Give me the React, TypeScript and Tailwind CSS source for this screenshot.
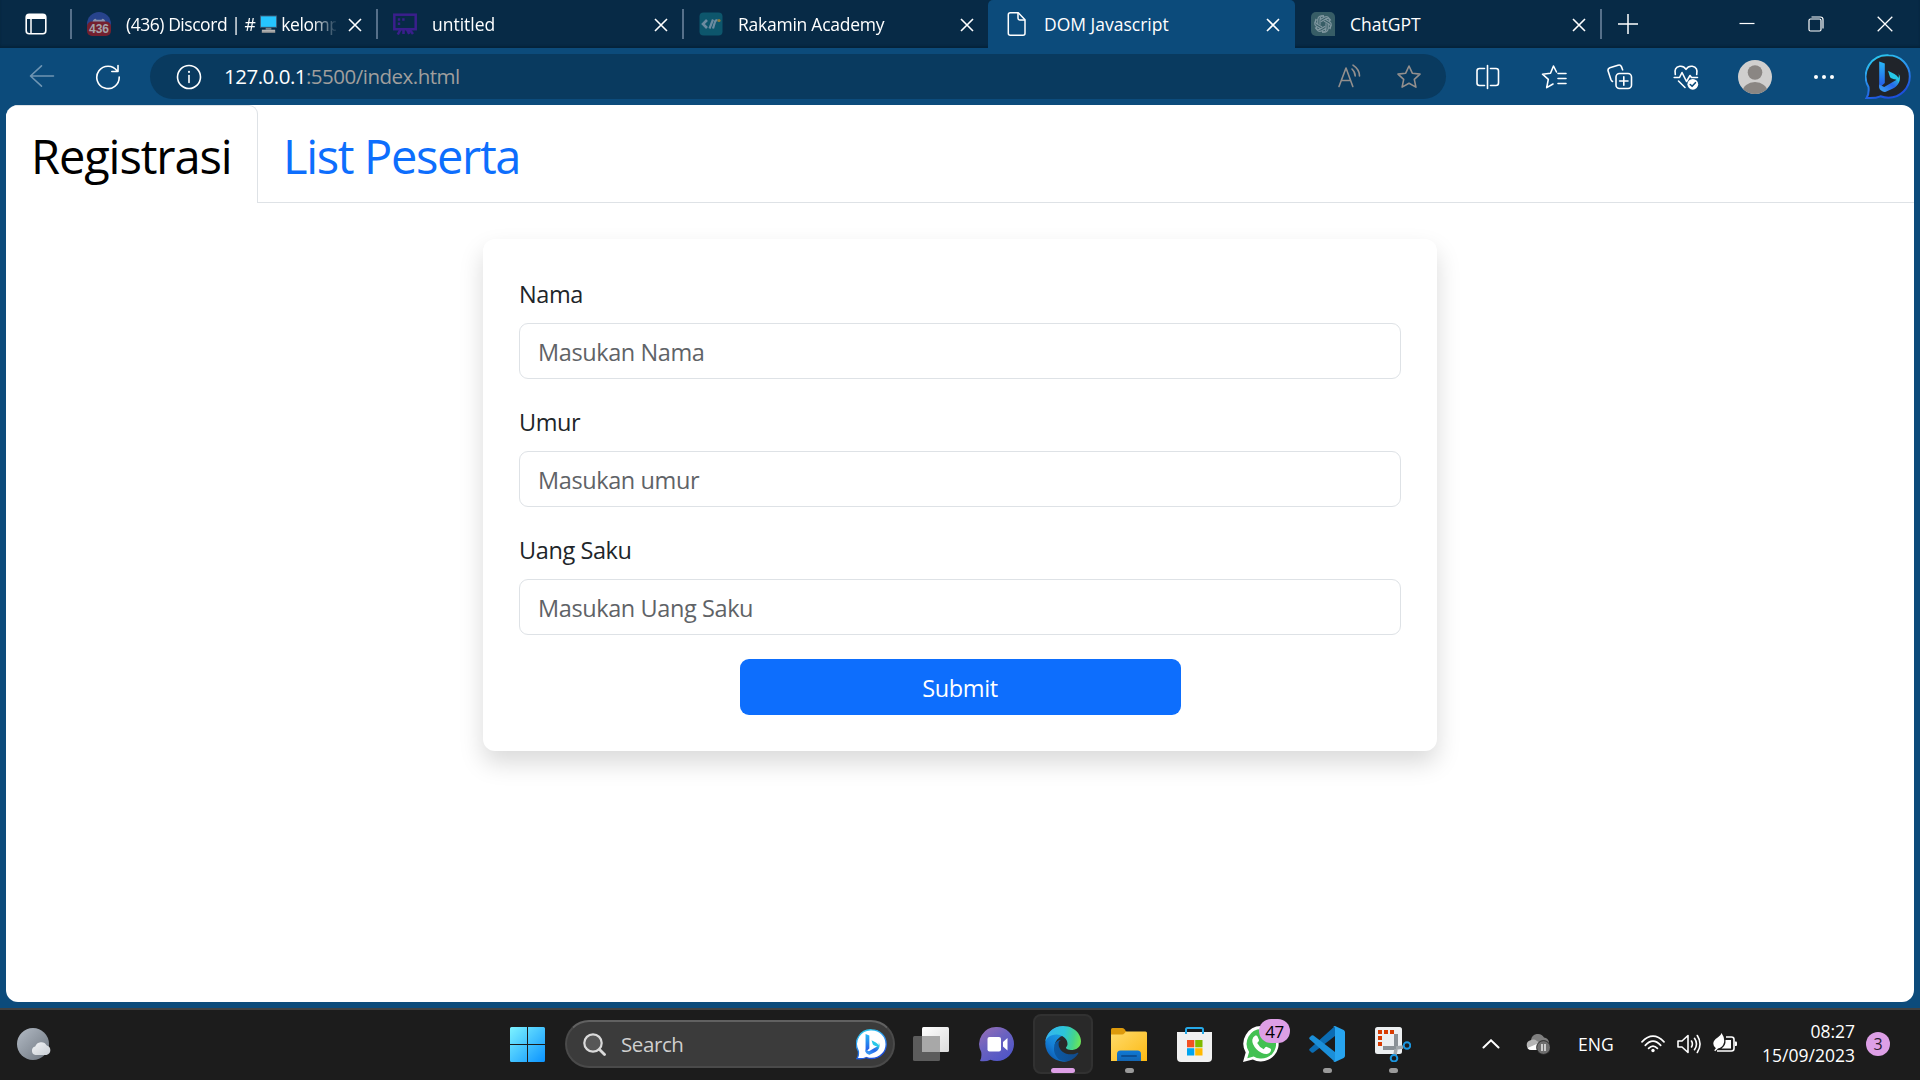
import React, { ReactNode } from "react";

/* ---------- Browser icons ---------- */

const DiscordFavicon = () => (
  <svg viewBox="0 0 24 24" className="h-6 w-6">
    <circle cx="12" cy="12" r="12" fill="#27438c" />
    <path d="M5.500 10c.4-1.800 1.500-3 3.200-3.200l.8.9h5l.8-.9c1.700.2 2.800 1.400 3.200 3.200z" fill="#8791ac" />
    <rect x="0" y="9.500" width="24" height="14.500" rx="5" fill="#74202f" />
    <text x="12" y="21" textAnchor="middle" fontFamily="Liberation Sans" fontWeight="700" fontSize="12" fill="#a5a4aa">
      436
    </text>
  </svg>
);

const BoardFavicon = () => (
  <svg viewBox="0 0 24 24" className="h-6 w-6" fill="none" stroke="#3a1f8c" strokeWidth="2.500">
    <rect x="1.300" y="2.700" width="21.400" height="14.500" />
    <path d="M7.500 17.500l-2.700 5M10.500 17.500v4.500M14 17.500l2.200 4.500M16.500 17.500l3.500 4.500" strokeWidth="2.600" />
    <path d="M4.800 7.500h2.400M9.200 7.500h2.400M4.800 11.700h2.400" strokeWidth="2.400" />
  </svg>
);

const RakaminFavicon = () => (
  <svg viewBox="0 0 24 24" className="h-6 w-6">
    <rect x="0.500" y="0.500" width="23" height="23" rx="4" fill="#0d566c" />
    <path d="M8 8l-4 4 4 4" fill="none" stroke="#6c8ba0" strokeWidth="2.600" />
    <path d="M10.500 16.500l3.500-9M14 16.500l1.800-6q.5-2.300 2.700-2.300" fill="none" stroke="#6c8ba0" strokeWidth="2.200" />
    <circle cx="20" cy="8.500" r="1.600" fill="#8a7b3c" />
  </svg>
);

const PageFavicon = () => (
  <svg viewBox="0 0 24 24" className="h-6 w-6" fill="none" stroke="#fff" strokeWidth="1.500" strokeLinejoin="round">
    <path d="M5.300.8h8l6.700 7v13.400q0 2-2 2H5.300q-2 0-2-2V2.800q0-2 2-2z" />
    <path d="M13 .8v5.500q0 1.700 1.700 1.700H20" />
  </svg>
);

const ChatGptFavicon = () => (
  <svg viewBox="0 0 24 24" className="h-6 w-6">
    <path d="M5 0h14a5 5 0 0 1 5 5v19H5a5 5 0 0 1-5-5V5a5 5 0 0 1 5-5z" fill="#375d66" />
    <g fill="none" stroke="#7f969f" strokeWidth="1.200">
      {[0, 60, 120, 180, 240, 300].map((a) => (
        <path
          key={a}
          transform={`rotate(${a} 12 12)`}
          d="M9 12.800V7.700l4.300-2.500a3.700 3.700 0 0 1 5.300 4.300M9 7.700a3.700 3.700 0 0 1 4-4.200"
        />
      ))}
    </g>
  </svg>
);

const CloseIcon = () => (
  <svg viewBox="0 0 14 14" className="h-[14px] w-[14px]" stroke="#fff" strokeWidth="1.600">
    <path d="M1 1l12 12M13 1L1 13" />
  </svg>
);

const MonitorEmoji = () => (
  <svg viewBox="0 0 20 20" className="h-5 w-[19px] shrink-0">
    <rect x="1" y="1" width="18" height="13" fill="#3b5a74" />
    <rect x="2" y="2" width="16" height="11" fill="#26c5ff" />
    <path d="M7 14h6v2H7z" fill="#7b8389" />
    <path d="M3 16h14v3H3z" fill="#b3b3b3" />
    <path d="M3 18h14v1.200H3z" fill="#8a8a8a" />
  </svg>
);

const BingMark = ({ a, b, c }: { a: string; b: string; c: string }) => (
  <>
    <path d="M14.200 7.500l5.600 2v19.500l-5.600 5z" fill={a} />
    <path d="M14.200 30.500l5 2.500 12-7c2.500-1.500 3.300-4 2.300-6.500 4 6-.5 12.500-5.500 15l-7.200 3.300q-1.500.6-3-.2l-2-1.300q-1.600-1.200-1.600-3z" fill={b} />
    <path d="M23 16.800l6.500 3.200q5.500 3 4.500 9-1.500-4-5-3.700l-2.600-1.100q-1-.5-1.500-1.500z" fill={c} />
  </>
);

const BingChat = ({ className, face, id }: { className: string; face: string; id: string }) => (
  <svg viewBox="0 0 46 46" className={className}>
    <defs>
      <linearGradient id={id + "ring"} x1="0" y1="0" x2="0.400" y2="1">
        <stop offset="0" stopColor="#2ad3ee" />
        <stop offset="0.500" stopColor="#2b95ef" />
        <stop offset="1" stopColor="#1d50dd" />
      </linearGradient>
      <linearGradient id={id + "stem"} x1="0" y1="0" x2="0" y2="1">
        <stop offset="0" stopColor="#28b7f5" />
        <stop offset="1" stopColor="#2455e8" />
      </linearGradient>
      <linearGradient id={id + "base"} x1="0" y1="1" x2="1" y2="0">
        <stop offset="0" stopColor="#3fa9f5" />
        <stop offset="0.500" stopColor="#2668ec" />
        <stop offset="1" stopColor="#2be0d8" />
      </linearGradient>
    </defs>
    <path
      d="M23.500 1.200a21.300 21.300 0 1 1 0 42.600q-4 0-8-1.500-5 2.300-14 1.700 2.800-4 2-11A21.300 21.300 0 0 1 23.500 1.200z"
      fill={face}
      stroke={`url(#${id}ring)`}
      strokeWidth="2"
    />
    <BingMark a={`url(#${id}stem)`} b={`url(#${id}base)`} c="#25c8e8" />
  </svg>
);

/* ---------- Title bar ---------- */

type Tab = { title: ReactNode; icon: ReactNode; active?: boolean; divider?: boolean };

const tabs: Tab[] = [
  {
    icon: <DiscordFavicon />,
    divider: true,
    title: (
      <>
        <span className="tracking-[-0.460px]">(436) Discord | #</span>
        <span className="ml-[4px] mr-[3px] flex">
          <MonitorEmoji />
        </span>
        <span className="tracking-[-0.450px]">kelomp</span>
      </>
    ),
  },
  { icon: <BoardFavicon />, divider: true, title: "untitled" },
  { icon: <RakaminFavicon />, divider: true, title: <span className="tracking-[-0.250px]">Rakamin Academy</span> },
  { icon: <PageFavicon />, active: true, title: "DOM Javascript" },
  { icon: <ChatGptFavicon />, title: "ChatGPT" },
];

const BrowserTab = ({ title, icon, active, divider }: Tab) => (
  <div
    className={
      active
        ? "flex h-12 w-[307px] items-center rounded-t-[5px] bg-[#0c4b7b] pl-[17px]"
        : divider
          ? "flex h-12 w-[306px] items-center"
          : "flex h-12 w-[305px] items-center pl-4"
    }
  >
    {divider && <div className="mr-[15px] h-[30px] w-[2px] bg-[#56708a]" />}
    {icon}
    <div
      className={
        divider
          ? "ml-[15px] flex w-[210px] items-center whitespace-nowrap pb-px text-[17.5px] leading-6 text-white [mask-image:linear-gradient(to_right,black_186px,transparent_212px)]"
          : "ml-[15px] flex w-[210px] items-center whitespace-nowrap pb-px text-[17.5px] leading-6 text-white"
      }
    >
      {title}
    </div>
    <div className="ml-[12px] mt-[2px]">
      <CloseIcon />
    </div>
  </div>
);

const TitleBar = () => (
  <div className="flex h-12 shrink-0 items-center bg-[#072a46] shadow-[inset_0_-2px_2px_#05233b]">
    <div className="flex w-[70px] items-center pl-[25px]">
      <svg viewBox="0 0 22 22" className="h-[22px] w-[22px]">
        <rect x="1.200" y="1.200" width="19.600" height="19.600" rx="3" fill="none" stroke="#fff" strokeWidth="1.600" />
        <path d="M1.200 6V4q0-3 3-3h13.600q3 0 3 3v2z" fill="#fff" />
        <path d="M6 6v15" stroke="#fff" strokeWidth="1.500" />
      </svg>
    </div>
    {tabs.map((t, i) => (
      <BrowserTab key={i} {...t} />
    ))}
    <div className="h-[30px] w-[2px] bg-[#56708a]" />
    <div className="flex w-[52px] justify-center">
      <svg viewBox="0 0 22 22" className="h-[22px] w-[22px]" stroke="#fff" strokeWidth="1.500">
        <path d="M11 1v20M1 11h20" />
      </svg>
    </div>
    <div className="flex-1" />
    <div className="flex pr-px">
      <div className="flex w-[69px] justify-center">
        <svg viewBox="0 0 16 16" className="h-4 w-4" stroke="#fff" strokeWidth="1.200">
          <path d="M.5 7.500h15" />
        </svg>
      </div>
      <div className="flex w-[69px] justify-center">
        <svg viewBox="0 0 16 16" className="h-4 w-4" stroke="#fff" strokeWidth="1.200" fill="none">
          <rect x="1" y="3" width="12" height="12" rx="1.500" />
          <path d="M3.500 1H12.500q2.500 0 2.500 2.500V12.500" />
        </svg>
      </div>
      <div className="flex w-[69px] justify-center">
        <svg viewBox="0 0 16 16" className="h-4 w-4" stroke="#fff" strokeWidth="1.300">
          <path d="M.7.7l14.600 14.600M15.300.7L.7 15.300" />
        </svg>
      </div>
    </div>
  </div>
);

/* ---------- Address toolbar ---------- */

const starPath = "M13 2l3.300 7.200 7.700.9-5.700 5.300 1.600 7.700L13 19.200 6.100 23.100l1.600-7.700L2 10.100l7.700-.9z";

const ToolCell = ({ children }: { children: ReactNode }) => <div className="flex w-[66px] justify-center">{children}</div>;

const Line = ({ children, color = "#fff" }: { children: ReactNode; color?: string }) => (
  <svg
    viewBox="0 0 26 26"
    className="h-[26px] w-[26px]"
    fill="none"
    stroke={color}
    strokeWidth="1.600"
    strokeLinecap="round"
    strokeLinejoin="round"
  >
    {children}
  </svg>
);

const Toolbar = () => (
  <div className="flex h-[57px] shrink-0 items-center bg-[#0c4b7b]">
    <div className="flex w-[84px] justify-center">
      <Line color="#6f95b3">
        <path d="M1.500 12h23M12.500 1.800L1.500 12l11 10.200" />
      </Line>
    </div>
    <div className="flex w-[48px] justify-center">
      <Line>
        <path d="M22.200 7A11.200 11.200 0 1 0 24.200 13M23 1.500V7.500H16.800" />
      </Line>
    </div>
    <div className="ml-[18px] flex h-[45px] w-[1296px] items-center rounded-full bg-[#093a5f] pl-[26px] pr-[24px]">
      <Line>
        <circle cx="13" cy="13" r="11.500" />
        <path d="M13 11.500v7" />
        <path d="M13 7.800v.1" strokeWidth="2" />
      </Line>
      <div className="ml-[22px] flex-1 pb-[2px] text-[20.5px] leading-7 text-white">
        <span className="tracking-[-0.500px]">127.0.0.1</span>
        <span className="tracking-[-0.500px] text-[#a09f9d]">:5500/index.html</span>
      </div>
      <Line color="#938f8d">
        <path d="M2 22.500L9 4l6.800 18.500M4.300 16.500h9.200M15 5q3.200 3 3.200 7M16 1.200q6.500 4.300 6.500 10.800" />
      </Line>
      <div className="ml-[33px]">
        <Line color="#938f8d">
          <path d={starPath} />
        </Line>
      </div>
    </div>
    <div className="ml-[9px] flex items-center">
      <ToolCell>
        <Line>
          <path d="M12.500 1.500v23M9.500 4.500H4.500q-2.500 0-2.500 2.500v12q0 2.500 2.500 2.500h5M15.500 4.500h5.500q2.500 0 2.500 2.500v12q0 2.500-2.500 2.500h-5.500" />
        </Line>
      </ToolCell>
      <ToolCell>
        <Line>
          <path d="M15.500 8L12.500 2 9.500 9.200l-8 1 5.800 5.200-1.600 8.200 6.300-3.600M17 9.500h8M17 14.500h8M17 19.500h8" />
        </Line>
      </ToolCell>
      <ToolCell>
        <Line>
          <rect x="9" y="9.500" width="15.500" height="15" rx="3.500" />
          <path d="M16.800 12.800v8.400M12.600 17h8.400M5.500 17.500q-1-.5-1.600-2L1.200 7.200q-.8-2.500 1.600-3.400L11 1.200q2.400-.8 3.400 1.400l1.200 3.200" />
        </Line>
      </ToolCell>
      <ToolCell>
        <Line>
          <path d="M2.300 10.500Q.7 3.500 6.700 2.300q4-.6 6.300 3 2.300-3.600 6.300-3 6 1.200 4.400 8.200M1.200 13.500h5.300l2.500-5 4.500 9 3.500-6 1.500 2h6M5.500 17l6.500 6.500" />
          <circle cx="19.800" cy="20.300" r="5.400" fill="#fff" stroke="none" />
          <path d="M17.300 20.500l1.800 1.800 3.300-3.600" stroke="#0c4b7b" />
        </Line>
      </ToolCell>
      <div className="flex w-[72px] justify-center">
        <svg viewBox="0 0 34 34" className="h-[34px] w-[34px]">
          <clipPath id="avatar">
            <circle cx="17" cy="17" r="17" />
          </clipPath>
          <g clipPath="url(#avatar)">
            <rect width="34" height="34" fill="#d0cfce" />
            <circle cx="17" cy="12.500" r="7.300" fill="#8a8683" />
            <ellipse cx="17" cy="32" rx="12.500" ry="10" fill="#8a8683" />
          </g>
        </svg>
      </div>
      <ToolCell>
        <svg viewBox="0 0 22 34" className="h-[34px] w-[22px]" fill="#fff">
          <circle cx="3" cy="17" r="2" />
          <circle cx="11" cy="17" r="2" />
          <circle cx="19" cy="17" r="2" />
        </svg>
      </ToolCell>
      <div className="flex h-[34px] w-[61px] items-center justify-center">
        <BingChat className="h-[46px] w-[46px] shrink-0" face="#20242a" id="tb" />
      </div>
    </div>
  </div>
);

/* ---------- Page ---------- */

const fields = [
  { label: "Nama", placeholder: "Masukan Nama" },
  { label: "Umur", placeholder: "Masukan umur" },
  { label: "Uang Saku", placeholder: "Masukan Uang Saku" },
];

const Page = () => (
  <div className="mx-[6px] flex-1 overflow-hidden rounded-xl bg-white">
    <div className="flex h-[98px] text-[47px] leading-none">
      <div className="flex w-[252px] items-center rounded-t-[9px] border border-b-0 border-[#dee2e6] border-l-white pl-[24px] pt-[4px] tracking-[-1.100px] text-black">
        Registrasi
      </div>
      <div className="flex flex-1 items-center border-b border-[#dee2e6] pl-[25px] pt-[5px] tracking-[-1.350px] text-[#0d6efd]">
        List Peserta
      </div>
    </div>
    <form className="mx-auto mt-9 w-[954px] rounded-xl bg-white p-9 text-[23.5px] tracking-[-0.400px] shadow-[0_12px_24px_rgba(0,0,0,0.15)]">
      {fields.map((f) => (
        <div key={f.label} className="mb-6">
          <label className="mb-[11px] block pt-px leading-9 text-[#212529]">{f.label}</label>
          <input
            type="text"
            placeholder={f.placeholder}
            className="block h-14 w-full rounded-[9px] border border-[#dee2e6] px-[18px] pt-[2px] placeholder:text-[#5f6367] outline-none"
          />
        </div>
      ))}
      <button type="button" className="mx-auto block h-14 w-[441px] rounded-[9px] bg-[#0d6efd] pt-[3px] text-white">
        Submit
      </button>
    </form>
  </div>
);

/* ---------- Taskbar ---------- */

const TaskSlot = ({ children, running, active }: { children: ReactNode; running?: boolean; active?: boolean }) => (
  <div className="flex w-[66px] justify-center">
    <div
      className={
        active
          ? "relative flex h-[60px] w-[60px] items-center justify-center rounded-lg border-2 border-[#313131] bg-[#292929]"
          : "relative flex h-[60px] w-[60px] items-center justify-center"
      }
    >
      {children}
      {active && <span className="absolute -bottom-px left-4 h-[5px] w-6 rounded-full bg-[#dd9fe6]" />}
      {running && <span className="absolute bottom-px left-[26px] h-[5px] w-[9px] rounded-full bg-[#9a9a9a]" />}
    </div>
  </div>
);

const icon36 = "h-9 w-9";

const TaskView = () => (
  <svg viewBox="0 0 36 36" className={icon36}>
    <defs>
      <linearGradient id="tvw" x1="0" y1="0" x2="1" y2="1">
        <stop offset="0" stopColor="#fff" />
        <stop offset="1" stopColor="#dcdcdc" />
      </linearGradient>
    </defs>
    <rect x="9" y="1" width="27" height="25" rx="1.500" fill="url(#tvw)" />
    <rect x="0" y="10" width="27" height="25" rx="1.500" fill="#5c5c5c" />
    <path d="M9 10h17q1 0 1 1v15H9z" fill="#a8a8a8" />
  </svg>
);

const ChatIcon = () => (
  <svg viewBox="0 0 36 36" className={icon36}>
    <defs>
      <linearGradient id="chat" x1="0" y1="0" x2="0.700" y2="1">
        <stop offset="0" stopColor="#9a6fb5" />
        <stop offset="0.500" stopColor="#6a62c0" />
        <stop offset="1" stopColor="#4f55c8" />
      </linearGradient>
    </defs>
    <path d="M18 1a17 17 0 1 1 0 34q-3.500 0-6.500-1.300Q7 36 1 35q2-3.500 1.200-9A17 17 0 0 1 18 1z" fill="url(#chat)" />
    <rect x="8.500" y="11" width="13.500" height="14.500" rx="2" fill="#fff" />
    <path d="M24 16l4.500-4v12.500l-4.500-4z" fill="#fff" />
  </svg>
);

const EdgeIcon = () => (
  <svg viewBox="0 0 256 256" className={icon36}>
    <defs>
      <linearGradient id="e1" x1="63" y1="177" x2="241" y2="177" gradientUnits="userSpaceOnUse">
        <stop offset="0" stopColor="#0c59a4" />
        <stop offset="1" stopColor="#114a8b" />
      </linearGradient>
      <linearGradient id="e2" x1="157" y1="100" x2="46" y2="221" gradientUnits="userSpaceOnUse">
        <stop offset="0" stopColor="#1b9de2" />
        <stop offset="0.600" stopColor="#1580d8" />
        <stop offset="1" stopColor="#0e62b8" />
      </linearGradient>
      <linearGradient id="e3" x1="10" y1="60" x2="250" y2="110" gradientUnits="userSpaceOnUse">
        <stop offset="0" stopColor="#35b5ee" />
        <stop offset="0.500" stopColor="#2cc5d8" />
        <stop offset="0.800" stopColor="#45d48c" />
        <stop offset="1" stopColor="#6be55a" />
      </linearGradient>
    </defs>
    <path
      fill="url(#e1)"
      d="M231 190.500c-3.400 1.800-6.900 3.400-10.500 4.700a101.700 101.700 0 0 1-35.800 6.500c-47.200 0-88.300-32.500-88.300-74.200.1-11.400 6.300-21.900 16.200-27.400-42.700 1.800-53.700 46.300-53.700 72.400 0 73.700 68 81.200 82.600 81.200 7.900 0 19.800-2.300 27-4.600l1.300-.4a128.300 128.300 0 0 0 66.600-52.800c1.200-1.900.6-4.300-1.200-5.500-1.300-.8-2.900-.8-4.200.1z"
    />
    <path
      fill="url(#e2)"
      d="M105.700 241.400a79.200 79.200 0 0 1-22.700-21.300c-32.700-44.800-22.900-107.600 21.900-140.300 2.400-1.700 4.800-3.300 7.400-4.800 5.500-2.600 14.100-6.300 25.800-6.300 26-5 32 20 32.200 27.400 0-.2 18-46-32.200-80C70-10 10 40 2 122a128 128 0 0 0 12.100 56.300c27.600 58.800 94.900 87.500 156.500 66.700-21.100 6.700-46.100 3.300-64.900-3.600z"
    />
    <path
      fill="url(#e3)"
      d="M152.300 148.900c-.9 1-3.400 2.500-3.400 5.600 0 2.600 1.700 5.200 4.700 7.300 14.400 10 41.500 8.700 41.600 8.700 10.600 0 21.100-2.900 30.300-8.300a61.400 61.400 0 0 0 30.400-52.900c.3-22.400-8-37.300-11.300-43.900C223.500 23.900 177.700 0 128 0A128 128 0 0 0 0 126.200c.5-36.500 36.800-66 80-66 3.500 0 23.500.3 42 10.100 16.300 8.600 24.900 18.900 30.800 29.200 6.200 10.700 7.300 24.100 7.300 29.500 0 5.300-2.700 13.300-7.800 19.900z"
    />
  </svg>
);

const FolderIcon = () => (
  <svg viewBox="0 0 36 36" className={icon36}>
    <defs>
      <linearGradient id="fold" x1="0" y1="0" x2="1" y2="1">
        <stop offset="0" stopColor="#ffdb6b" />
        <stop offset="1" stopColor="#fcb913" />
      </linearGradient>
      <linearGradient id="foldb" x1="0" y1="0" x2="0" y2="1">
        <stop offset="0" stopColor="#0f7ad6" />
        <stop offset="1" stopColor="#1466b3" />
      </linearGradient>
    </defs>
    <path d="M0 9V3.500Q0 2 1.500 2H11q1.500 0 2.500 1.200L15.500 6v3z" fill="#dd9a0c" />
    <path d="M0 8.500h11q1.500 0 2.500-1.200L15 5.500h19.500Q36 5.500 36 7v28H0z" fill="url(#fold)" />
    <path d="M6 35v-7q0-3.500 3.500-3.500h17q3.500 0 3.500 3.500v7z" fill="url(#foldb)" />
    <path d="M11 30h14" stroke="#0b4f94" strokeWidth="2" strokeLinecap="round" />
  </svg>
);

const StoreIcon = () => (
  <svg viewBox="0 0 36 36" className={icon36}>
    <path d="M9 8V3.500Q9 2 10.500 2h14q1.500 0 1.500 1.500V8" fill="none" stroke="#26a9e8" strokeWidth="2" />
    <path d="M0 6h35v26q0 4-4 4H4q-4 0-4-4z" fill="#f1f1f1" />
    <path d="M9 6v2M26 6v2" stroke="#26a9e8" strokeWidth="2" />
    <rect x="10" y="14" width="7.300" height="7.300" fill="#f25022" />
    <rect x="18.200" y="14" width="7.300" height="7.300" fill="#7fba00" />
    <rect x="10" y="22.200" width="7.300" height="7.300" fill="#00a4ef" />
    <rect x="18.200" y="22.200" width="7.300" height="7.300" fill="#ffb900" />
  </svg>
);

const WhatsAppIcon = () => (
  <svg viewBox="0 0 36 36" className={icon36}>
    <path d="M18.300 0A17.700 17.700 0 1 1 9.800 33.400L0 36l2.700-9.600A17.700 17.700 0 0 1 18.300 0z" fill="#fff" />
    <path d="M18.300 3a14.800 14.800 0 1 1-7.600 27.500L4.300 32.200l1.800-6.300A14.800 14.800 0 0 1 18.300 3z" fill="#43c153" />
    <path
      d="M12.300 9.500q1.500-.5 2.200 1l1.400 3.300q.3.900-.4 1.700l-1.300 1.500q2.200 4.300 6.500 6.200l1.600-1.900q.7-.8 1.600-.4l3.400 1.700q1 .6.700 1.700-.7 3.300-4.200 3.700-5.400.2-10.300-4.800Q8.900 18.500 9.300 13.800q.5-3 3-4.300z"
      fill="#fff"
    />
  </svg>
);

const VsCodeIcon = () => (
  <svg viewBox="0 0 36 36" className={icon36}>
    <path d="M26 0v10L4.500 26.500q-1 .7-1.900 0L.7 24.700q-1-1 0-2z" fill="#0b6cb3" />
    <path d="M26 36V26L4.500 9.500q-1-.7-1.900 0L.7 11.300q-1 1 0 2z" fill="#1b8fd9" />
    <path d="M26 0l8.700 4q1.300.7 1.300 2.200v23.600q0 1.500-1.300 2.200L26 36q-1.200.2-2-.7 2 .8 2-1.300V2Q26-.1 24 .7q.8-.9 2-.7z" fill="#27a4ef" />
  </svg>
);

const SnipIcon = () => (
  <svg viewBox="0 0 36 36" className={icon36}>
    <rect x="0" y="1" width="27" height="27" rx="2.500" fill="#eceff1" />
    <g fill="#d83b01">
      <path d="M3 4h4v4H3zM9 4h4v4H9zM15 4h4v4h-4zM3 10h4v4H3zM3 16h4v4H3z" />
    </g>
    <path d="M21 8v15M8 22h13" stroke="#8a9196" strokeWidth="4" />
    <path d="M21 22l7-1M21 23l-1 6" stroke="#a2a8ac" strokeWidth="3.500" />
    <circle cx="32" cy="19.500" r="3.300" fill="none" stroke="#1a96e0" strokeWidth="2" />
    <circle cx="19" cy="32.300" r="3.300" fill="none" stroke="#1a96e0" strokeWidth="2" />
  </svg>
);

const Taskbar = () => (
  <div className="flex h-[72px] shrink-0 items-center border-t-2 border-[#404040] bg-[#1c1c1c] pb-[2px]">
    <div className="w-[494px] pl-[17px]">
      <svg viewBox="0 0 34 32" className="h-8 w-[34px]">
        <defs>
          <linearGradient id="moon" x1="0" y1="0" x2="1" y2="1">
            <stop offset="0" stopColor="#b3bbc5" />
            <stop offset="1" stopColor="#6d757f" />
          </linearGradient>
          <linearGradient id="cloud" x1="0" y1="0" x2="1" y2="1">
            <stop offset="0" stopColor="#f2f4f6" />
            <stop offset="1" stopColor="#c9ced4" />
          </linearGradient>
        </defs>
        <circle cx="16" cy="16" r="16" fill="url(#moon)" />
        <path d="M18.500 27a4.300 4.300 0 0 1-.3-8.400 6.300 6.300 0 0 1 11.600-1.100A4.900 4.900 0 0 1 29.500 27z" fill="url(#cloud)" />
      </svg>
    </div>
    <div className="flex w-[66px] justify-center">
      <svg viewBox="0 0 35 35" className="h-[35px] w-[35px]">
        <defs>
          <linearGradient id="win" x1="0" y1="0" x2="35" y2="35" gradientUnits="userSpaceOnUse">
            <stop offset="0" stopColor="#7df3ff" />
            <stop offset="1" stopColor="#0b93ff" />
          </linearGradient>
        </defs>
        <g fill="url(#win)">
          <path d="M1.500 0H17v17H0V1.500Q0 0 1.500 0zM18 0h15.500Q35 0 35 1.500V17H18zM0 18h17v17H1.500Q0 35 0 33.500zM18 18h17v15.500q0 1.500-1.500 1.500H18z" />
        </g>
      </svg>
    </div>
    <div className="ml-[5px] mr-[3px] flex h-12 w-[330px] items-center rounded-full border-2 border-[#4a4a4a] border-t-[#616161] bg-[#3b3b3b] pl-4">
      <svg viewBox="0 0 23 23" className="h-[23px] w-[23px]" fill="none" stroke="#dadada" strokeLinecap="round">
        <circle cx="10" cy="10" r="8.700" strokeWidth="2.200" fill="#575757" />
        <path d="M16.500 16.500l5 5" strokeWidth="2.800" />
      </svg>
      <span className="ml-[15px] w-[235px] text-[20.5px] leading-7 tracking-[-0.400px] text-[#cfcfcf]">Search</span>
      <BingChat className="h-[31px] w-[31px]" face="#ffffff" id="sb" />
    </div>
    <TaskSlot>
      <TaskView />
    </TaskSlot>
    <TaskSlot>
      <ChatIcon />
    </TaskSlot>
    <TaskSlot active>
      <EdgeIcon />
    </TaskSlot>
    <TaskSlot running>
      <FolderIcon />
    </TaskSlot>
    <TaskSlot>
      <StoreIcon />
    </TaskSlot>
    <TaskSlot>
      <WhatsAppIcon />
      <span className="absolute left-[28px] top-[5px] flex h-6 w-[31px] items-center justify-center rounded-full bg-[#dd9fe6] text-[17px] leading-none tracking-[-0.500px] text-black">
        47
      </span>
    </TaskSlot>
    <TaskSlot running>
      <VsCodeIcon />
    </TaskSlot>
    <TaskSlot running>
      <SnipIcon />
    </TaskSlot>
    <div className="flex-1" />
    <div className="flex items-center pr-[30px] text-[17.5px] text-white">
      <svg viewBox="0 0 18 10" className="h-[10px] w-[18px]" fill="none" stroke="#fff" strokeWidth="2" strokeLinecap="round">
        <path d="M1.500 8.500L9 1.300l7.500 7.200" />
      </svg>
      <svg viewBox="0 0 24 22" className="ml-[26px] h-[22px] w-6">
        <path d="M5 7a7 7 0 0 1 13-2.500A6 6 0 0 1 21 15H12z" fill="#7f7f7f" />
        <path d="M5 17A5 5 0 0 1 4.500 7.200Q8 5.500 11 8l6 4-8 5z" fill="#b5b5b5" />
        <path d="M1.500 15L13 10v7H5q-2.500 0-3.500-2z" fill="#fff" />
        <circle cx="17.500" cy="14.500" r="6.900" fill="#6f6f6f" stroke="#1c1c1c" strokeWidth="0.800" />
        <path d="M16 11v7M19 11v7" stroke="#fff" strokeWidth="1.300" />
      </svg>
      <span className="ml-[28px] w-[38px] leading-6">ENG</span>
      <svg viewBox="0 0 24 18" className="ml-[25px] h-[18px] w-6" fill="none" stroke="#fff" strokeWidth="1.700" strokeLinecap="round">
        <path d="M1 6.800Q12-4.500 23 6.800M4.300 10.300Q12 2 19.700 10.300M7.600 13.300Q12 8.800 16.400 13.300" />
        <circle cx="12" cy="15.500" r="1.700" fill="#fff" stroke="none" />
      </svg>
      <svg viewBox="0 0 24 20" className="ml-[12px] h-5 w-6" fill="none" stroke="#fff" strokeWidth="1.600" strokeLinecap="round" strokeLinejoin="round">
        <path d="M1 7h4l6-5.500v17L5 13H1zM14.500 7q1.800 3 0 6M17.500 4.300q4 5.700 0 11.400M20.300 1.500q5.500 8.500 0 17" />
      </svg>
      <svg viewBox="0 0 24 20" className="mb-[2px] ml-[12px] h-5 w-6">
        <path d="M13 4h5.500q2.500 0 2.500 2.500v9q0 2.500-2.500 2.500H4" fill="none" stroke="#fff" strokeWidth="1.600" />
        <path d="M22 8.500h1q1 0 1 1V12q0 1-1 1h-1z" fill="#fff" />
        <path d="M12.500 7h5.500v8.500H8.500q4.500-3 4-8.500z" fill="#fff" />
        <path d="M8.500 0q3.500 5 2.500 9.500-1.200 5-6 6l-2.800 2.800-1-1 1.700-2Q-1 12 1 8q1.200-2.300 4-3.800Q8 2.500 8.500 0z" fill="#fff" />
      </svg>
      <div className="mb-[2px] ml-[24px] w-[94px] whitespace-nowrap text-right leading-6">
        <div>08:27</div>
        <div>15/09/2023</div>
      </div>
      <span className="ml-[11px] flex h-6 w-6 items-center justify-center rounded-full bg-[#dd9fe6] text-[16px] leading-none text-[#2b1a2e]">
        3
      </span>
    </div>
  </div>
);

export default function App() {
  return (
    <div className="flex h-[1080px] w-[1920px] flex-col overflow-hidden bg-[#0c4b7b] font-['Open_Sans','Noto_Sans',sans-serif]">
      <TitleBar />
      <Toolbar />
      <Page />
      <div className="h-[6px] shrink-0" />
      <Taskbar />
    </div>
  );
}
